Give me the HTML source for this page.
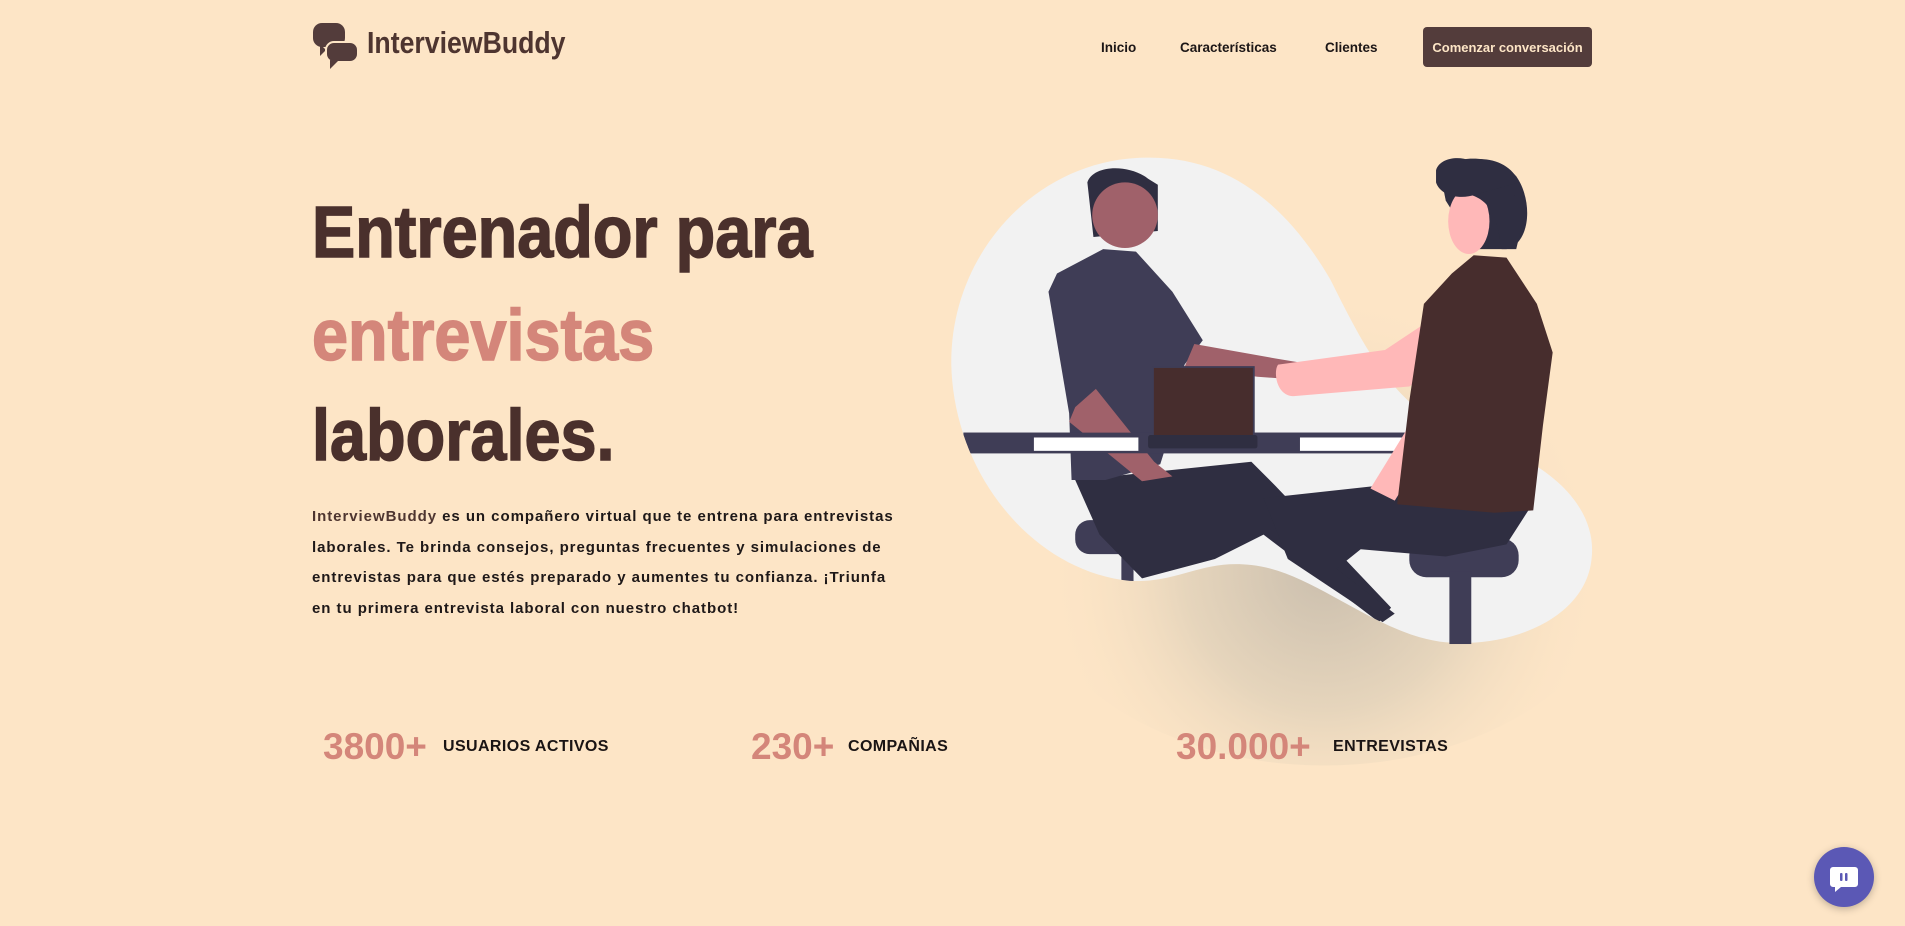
<!DOCTYPE html>
<html><head><meta charset="utf-8"><style>
*{margin:0;padding:0;box-sizing:border-box}
body{width:1905px;height:926px;overflow:hidden;background:#fde5c6;font-family:"Liberation Sans",sans-serif;position:relative}
.abs{position:absolute;white-space:nowrap}
.logo{left:367px;top:25px;font-size:31px;font-weight:bold;color:#4e3530;transform:scaleX(.86);transform-origin:left}
.nav{font-size:13.5px;font-weight:bold;color:#1c1616;top:40px}
.btn{left:1423px;top:27px;width:169px;height:40px;background:#533c3b;border-radius:4px;color:#fde5c6;font-size:13px;font-weight:bold;display:flex;align-items:center;justify-content:center}
.h{left:312px;font-size:72px;font-weight:bold;color:#4a302c;transform:scaleX(.9);transform-origin:left;-webkit-text-stroke:1.5px currentColor}
.p{left:312px;top:502px;font-size:15px;font-weight:bold;color:#1e1818;line-height:30.5px;letter-spacing:.95px}
.num{font-size:37px;font-weight:bold;color:#d4867a;top:726px}
.lab{font-size:16px;font-weight:bold;color:#1a1414;top:738px;letter-spacing:.4px}
</style></head><body>
<svg class="abs" style="left:0;top:0" width="1905" height="926" viewBox="0 0 1568 762">
<defs>
<radialGradient id="sh" cx="1090" cy="470" r="230" gradientUnits="userSpaceOnUse">
<stop offset="0" stop-color="#cbbfae"/><stop offset=".5" stop-color="#e6d5bc"/><stop offset="1" stop-color="#fde5c6" stop-opacity="0"/></radialGradient>
<clipPath id="bl"><path d="M935 130 C1010 125 1060 170 1095 230 C1125 290 1150 340 1210 360 C1280 380 1315 420 1310 460 C1305 510 1240 535 1185 528 C1130 520 1080 470 1030 465 C990 460 970 480 930 478 C850 470 785 390 783 300 C782 210 850 135 935 130 Z"/></clipPath>
</defs>
<ellipse cx="1090" cy="440" rx="260" ry="190" fill="url(#sh)"/>
<path d="M935 130 C1010 125 1060 170 1095 230 C1125 290 1150 340 1210 360 C1280 380 1315 420 1310 460 C1305 510 1240 535 1185 528 C1130 520 1080 470 1030 465 C990 460 970 480 930 478 C850 470 785 390 783 300 C782 210 850 135 935 130 Z" fill="#f2f2f2"/>
<g clip-path="url(#bl)">
<rect x="885" y="428" width="48" height="28" rx="12" fill="#3f3d56"/>
<rect x="923" y="450" width="10" height="40" fill="#3f3d56"/>
<path d="M885 395 L1030 380 L1050 400 L1145 500 L1135 512 L1040 440 L1000 460 L940 476 L905 440 Z" fill="#2f2e41"/>
<rect x="793" y="356" width="520" height="17" fill="#3f3d56"/>
</g>
<path d="M908 205 L935 207 L965 240 L990 280 L975 300 L965 350 L955 382 L910 395 L882 395 L880 340 L863 240 L870 225 Z" fill="#3f3d56"/>
<path d="M983 283 L1050 295 L1068 298 L1062 312 L1035 310 L975 302 Z" fill="#a0616a"/>
<path d="M885 335 L902 320 L950 380 L965 392 L940 396 L880 347 Z" fill="#a0616a"/>
<path d="M895 150 C900 135 930 135 945 147 L953 152 L953 190 L900 195 Z" fill="#2f2e41"/>
<circle cx="926" cy="177" r="27" fill="#a0616a"/>
<rect x="793" y="356" width="10" height="0" fill="none"/>
<g clip-path="url(#bl)"><rect x="793" y="356" width="520" height="17" fill="#3f3d56"/></g>
<rect x="851" y="360" width="86" height="11" fill="#fff"/>
<rect x="1070" y="360" width="86" height="11" fill="#fff"/>
<rect x="949" y="302" width="83" height="57" fill="#472d2d" stroke="#3f3d56" stroke-width="1.5"/>
<rect x="945" y="358" width="90" height="11" rx="2" fill="#2f2e41"/>
<rect x="1160" y="443" width="90" height="32" rx="14" fill="#3f3d56"/>
<rect x="1193" y="470" width="18" height="60" fill="#3f3d56"/>
<path d="M1040 410 L1150 398 L1258 420 L1240 448 L1190 458 L1120 452 L1100 468 L1148 505 L1138 512 L1060 460 Z" fill="#2f2e41"/>
<path d="M1052 300 L1140 288 L1170 268 L1195 295 L1160 318 L1065 326 C1050 326 1048 305 1052 300 Z" fill="#ffb8b8"/>
<path d="M1128 402 L1160 350 L1168 380 L1148 412 Z" fill="#ffb8b8"/>
<path d="M1213 210 L1240 212 L1265 250 L1278 290 L1270 350 L1262 420 L1230 422 L1150 415 L1160 330 L1172 250 L1195 225 Z" fill="#472d2d"/>
<path d="M1185 140 C1195 128 1230 125 1248 145 C1262 165 1260 200 1240 205 L1215 205 L1190 165 Z" fill="#2f2e41"/>
<ellipse cx="1209" cy="182" rx="17" ry="27" fill="#ffb8b8"/>
<path d="M1210 160 C1225 165 1232 175 1236 205 L1248 205 L1255 175 L1240 150 Z" fill="#2f2e41"/>
<path d="M1182 140 C1185 130 1200 128 1210 132 C1225 128 1245 135 1250 150 L1215 160 C1200 165 1185 160 1182 150 Z" fill="#2f2e41"/>
</svg>
<svg class="abs" style="left:312px;top:22px" width="48" height="48" viewBox="0 0 48 48">
<rect x="1" y="1" width="32" height="24" rx="9" fill="#533c3b"/>
<path d="M8 22 L8 34 L14 28 Z" fill="#533c3b"/>
<rect x="14" y="20" width="32" height="20" rx="8" fill="#533c3b" stroke="#fde5c6" stroke-width="2"/>
<path d="M18 38 L18 47 L26 39 Z" fill="#533c3b"/>
</svg>
<div class="abs logo">InterviewBuddy</div>
<div class="abs nav" style="left:1101px">Inicio</div>
<div class="abs nav" style="left:1180px">Características</div>
<div class="abs nav" style="left:1325px">Clientes</div>
<div class="abs btn">Comenzar conversación</div>
<div class="abs h" style="top:192px">Entrenador para</div>
<div class="abs h" style="top:295px;color:#d4867a">entrevistas</div>
<div class="abs h" style="top:395px">laborales.</div>
<div class="abs p"><span style="color:#4e3530">InterviewBuddy</span> es un compañero virtual que te entrena para entrevistas<br>laborales. Te brinda consejos, preguntas frecuentes y simulaciones de<br>entrevistas para que estés preparado y aumentes tu confianza. ¡Triunfa<br>en tu primera entrevista laboral con nuestro chatbot!</div>
<div class="abs num" style="left:323px">3800+</div>
<div class="abs lab" style="left:443px">USUARIOS ACTIVOS</div>
<div class="abs num" style="left:751px">230+</div>
<div class="abs lab" style="left:848px">COMPAÑIAS</div>
<div class="abs num" style="left:1176px">30.000+</div>
<div class="abs lab" style="left:1333px">ENTREVISTAS</div>
<div class="abs" style="left:1814px;top:847px;width:60px;height:60px;border-radius:50%;background:#5b58b5;box-shadow:0 2px 8px rgba(0,0,0,.25)">
<svg width="60" height="60" viewBox="0 0 60 60"><path d="M19 20 h22 a3 3 0 0 1 3 3 v14 a3 3 0 0 1 -3 3 h-14 l-6 5 v-5 h-2 a3 3 0 0 1 -3 -3 v-14 a3 3 0 0 1 3 -3z" fill="#fff"/><rect x="26" y="26" width="2.5" height="8" rx="1" fill="#5b58b5"/><rect x="31" y="26" width="2.5" height="8" rx="1" fill="#5b58b5"/></svg>
</div>
</body></html>
